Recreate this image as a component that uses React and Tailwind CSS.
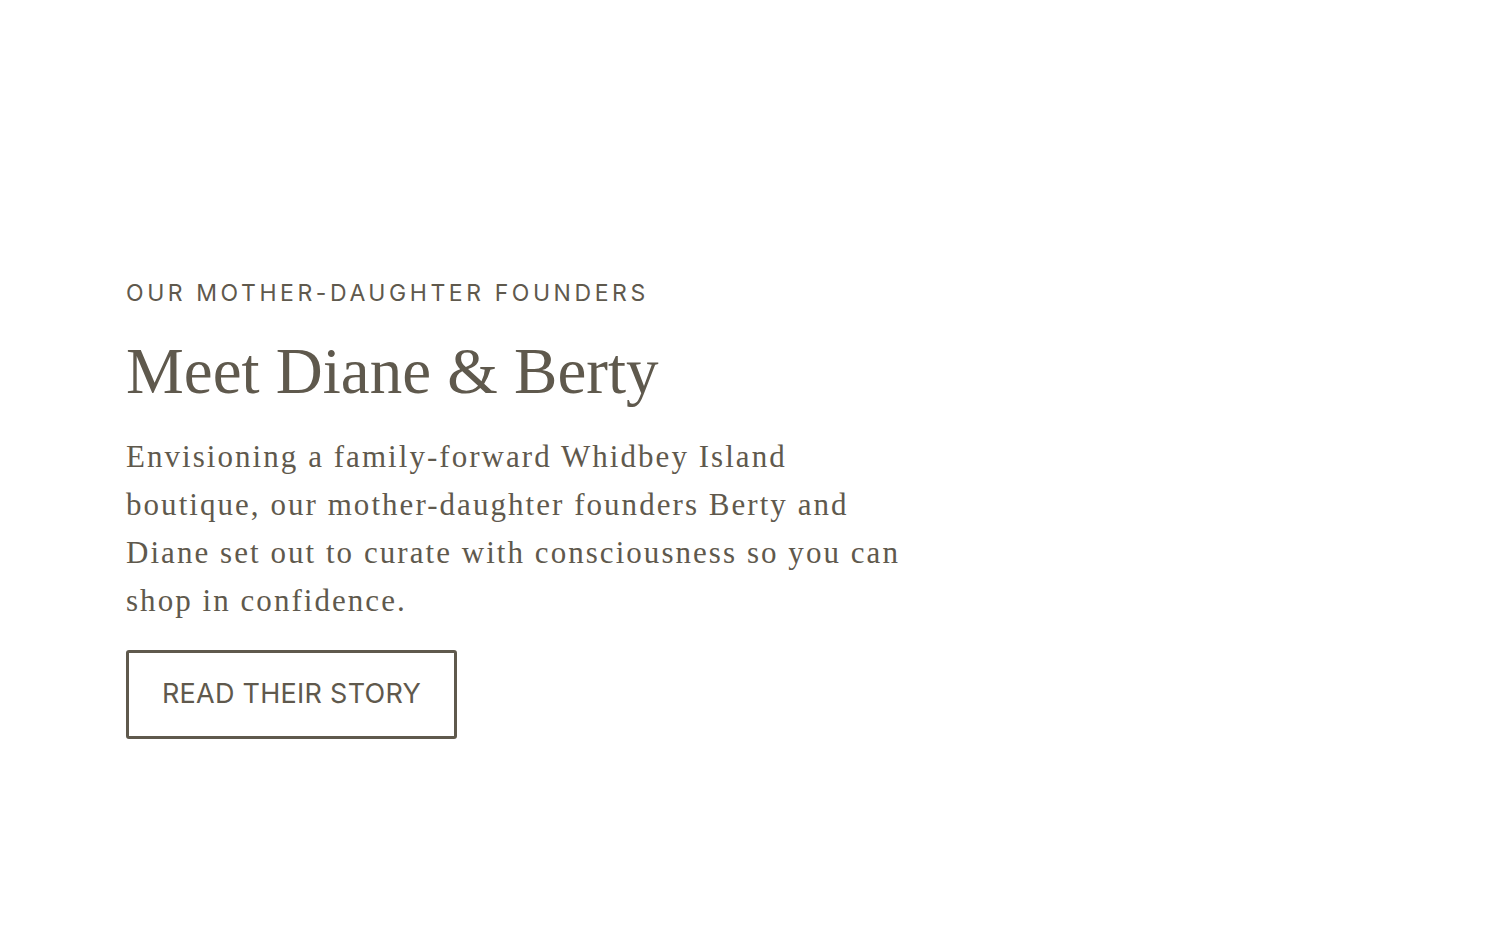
export default function App() {
  return (
    <div className="min-h-[938px] w-full bg-white text-[#5f594d]">
      <div className="pl-[126px] pt-[279px]">
        <p className="text-[23px] leading-[28px] tracking-[0.155em] font-['Inter',sans-serif] uppercase">
          Our Mother-Daughter Founders
        </p>
        <h2 className="mt-[26px] text-[65px] leading-[76px] font-['Liberation_Serif',serif]">
          Meet Diane &amp; Berty
        </h2>
        <p className="mt-[24px] max-w-[840px] text-[31px] leading-[48px] font-['Liberation_Serif',serif] tracking-[0.066em]">
          Envisioning a family-forward Whidbey Island
          <br />
          boutique, our mother-daughter founders Berty and
          <br />
          Diane set out to curate with consciousness so you can
          <br />
          shop in confidence.
        </p>
        <a
          href="#"
          className="mt-[25px] inline-flex h-[89px] w-[331px] items-center justify-center rounded-[3px] border-[3px] border-[#5f594d] text-[27px] tracking-[0.01em] font-['Inter',sans-serif] uppercase"
        >
          Read Their Story
        </a>
      </div>
    </div>
  );
}
